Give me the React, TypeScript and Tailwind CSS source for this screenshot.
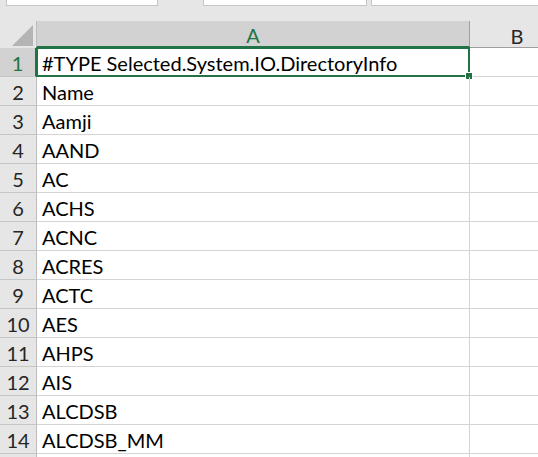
import React from "react";

const rows = [
  "#TYPE Selected.System.IO.DirectoryInfo",
  "Name",
  "Aamji",
  "AAND",
  "AC",
  "ACHS",
  "ACNC",
  "ACRES",
  "ACTC",
  "AES",
  "AHPS",
  "AIS",
  "ALCDSB",
  "ALCDSB_MM",
  "",
];

export default function App() {
  return (
    <div
      className="w-[538px] h-[457px] overflow-hidden bg-white text-[20px]"
      style={{ fontFamily: "Lato, 'Liberation Sans', sans-serif" }}
    >
      {/* top band */}
      <div className="h-[21px] bg-[#e6e6e6] flex items-start">
        <div className="ml-[6px] w-[152px] h-[6px] bg-white border border-t-0 border-[#c6c6c6]" />
        <div className="ml-[45px] w-[164px] h-[6px] bg-white border border-t-0 border-[#c6c6c6]" />
        <div className="ml-[4px] flex-1 h-[6px] bg-white border border-t-0 border-r-0 border-[#c6c6c6]" />
      </div>
      {/* column header */}
      <div className="h-[27px] flex">
        <div className="w-[37px] bg-[#e6e6e6] border-r border-[#bdbdbd] relative flex items-end justify-end pr-[3px] pb-[2px]">
          <svg width="21" height="21" viewBox="0 0 21 21">
            <polygon points="21,0 21,21 0,21" fill="#b4b4b4" />
          </svg>
        </div>
        <div className="w-[433px] bg-[#d2d2d2] border-r border-[#9e9e9e] border-b-2 border-b-[#217346] flex items-end justify-center text-[#217346] leading-none pb-[1px]">
          A
        </div>
        <div className="flex-1 bg-[#e6e6e6] border-b border-[#9e9e9e] flex items-end justify-center text-[#262626] leading-none pb-[1px] pl-[26px]">
          B
        </div>
      </div>
      {/* rows */}
      {rows.map((t, i) => (
        <div key={i} className="h-[29px] flex">
          <div
            className={
              "w-[37px] border-r border-b flex items-end justify-center leading-none pb-[3px] " +
              (i === 0
                ? "bg-[#d2d2d2] text-[#217346] border-r-[#217346] border-r-2 border-b-[#c6c6c6]"
                : "bg-[#e6e6e6] text-[#262626] border-r-[#bdbdbd] border-b-[#c6c6c6]")
            }
          >
            {i < 14 ? i + 1 : ""}
          </div>
          <div className="w-[433px] border-r border-b border-[#d4d4d4] flex items-end pb-[3px] pl-[5px] text-black leading-none relative">
            {t}
            {i === 0 && (
              <div className="absolute -left-px -top-px w-[434px] h-[30px] border-2 border-[#217346]">
                <div className="absolute -right-[5px] -bottom-[5px] w-[8px] h-[8px] bg-[#217346] border border-white" />
              </div>
            )}
          </div>
          <div className="flex-1 border-b border-[#d4d4d4]" />
        </div>
      ))}
    </div>
  );
}
